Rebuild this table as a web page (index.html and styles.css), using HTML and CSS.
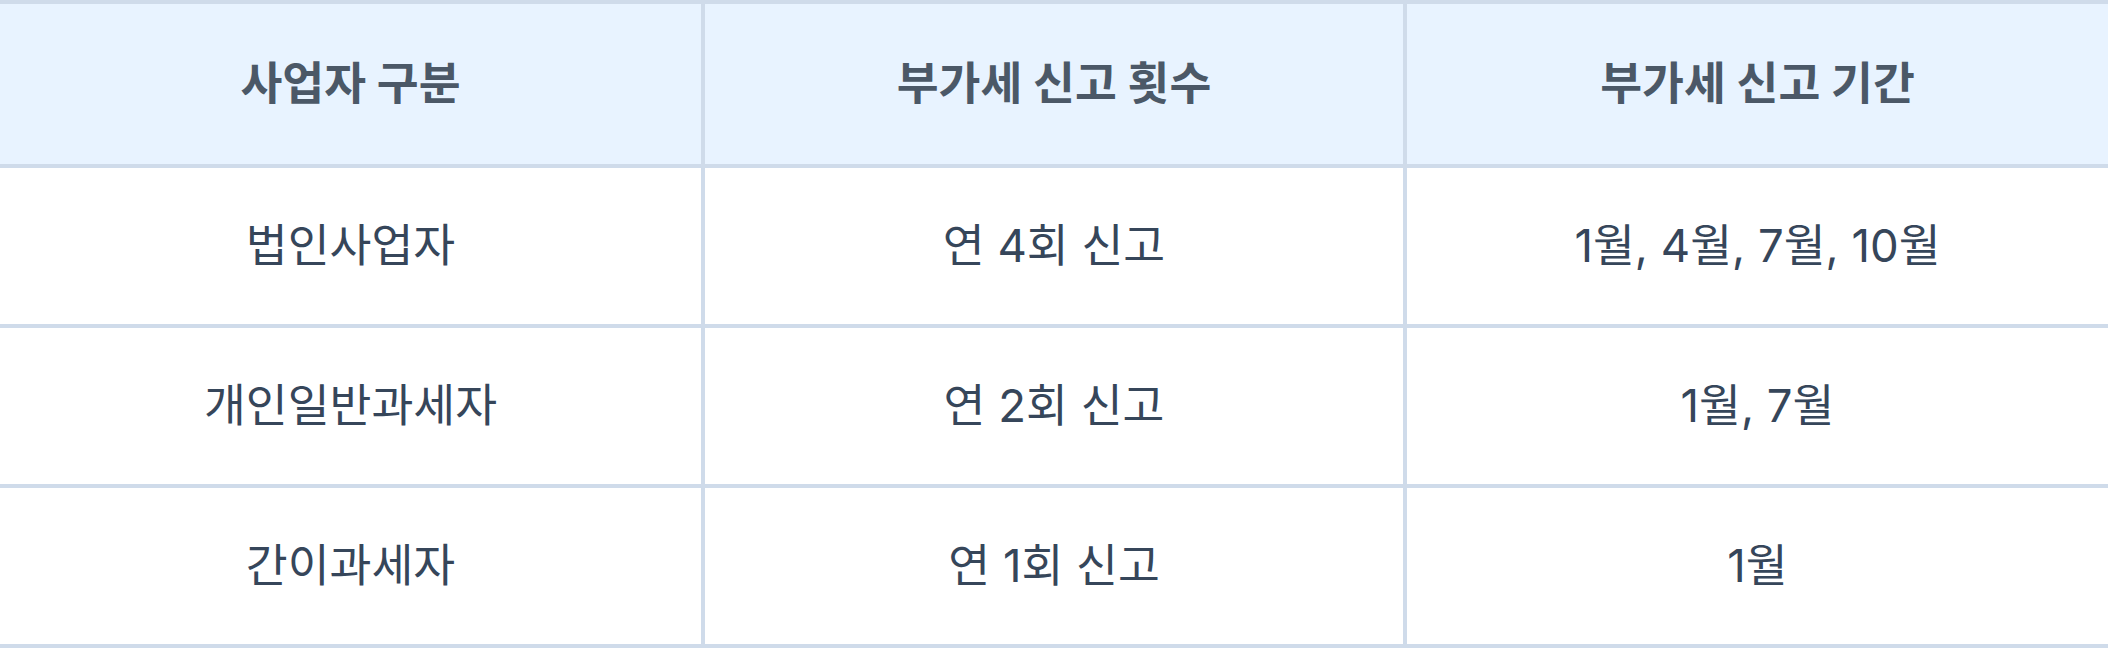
FILE: index.html
```html
<!DOCTYPE html>
<html lang="ko">
<head>
<meta charset="utf-8">
<title>부가세 신고</title>
<link rel="stylesheet" href="styles.css">
</head>
<body>
<table class="vat-table">
  <colgroup>
    <col class="c1">
    <col class="c2">
    <col class="c3">
  </colgroup>
  <thead>
    <tr>
      <th>사업자 구분</th>
      <th>부가세 신고 횟수</th>
      <th>부가세 신고 기간</th>
    </tr>
  </thead>
  <tbody>
    <tr>
      <td>법인사업자</td>
      <td>연 4회 신고</td>
      <td>1월, 4월, 7월, 10월</td>
    </tr>
    <tr>
      <td>개인일반과세자</td>
      <td>연 2회 신고</td>
      <td>1월, 7월</td>
    </tr>
    <tr>
      <td>간이과세자</td>
      <td>연 1회 신고</td>
      <td>1월</td>
    </tr>
  </tbody>
</table>
</body>
</html>
```

FILE: styles.css
```css
html, body {
  margin: 0;
  padding: 0;
  background: #ffffff;
}

.vat-table {
  width: 2108px;
  table-layout: fixed;
  border-collapse: separate;
  border-spacing: 0;
  border-top: 4px solid #cfdbea;
  font-family: Inter, "Noto Sans CJK KR", sans-serif;
  font-size: 45.5px;
  color: #36465a;
}

.c1 { width: 701px; }
.c2 { width: 702px; }
.c3 { width: 705px; }

.vat-table th,
.vat-table td {
  padding: 0;
  text-align: center;
  vertical-align: middle;
  border-bottom: 4px solid #cfdbea;
  line-height: 1.2;
}

.vat-table th + th,
.vat-table td + td {
  border-left: 4px solid #cfdbea;
}

.vat-table th {
  height: 160px;
  background: #e8f3ff;
  font-weight: 700;
  color: #4b5867;
}

.vat-table td {
  height: 156px;
  font-weight: 400;
}
```
